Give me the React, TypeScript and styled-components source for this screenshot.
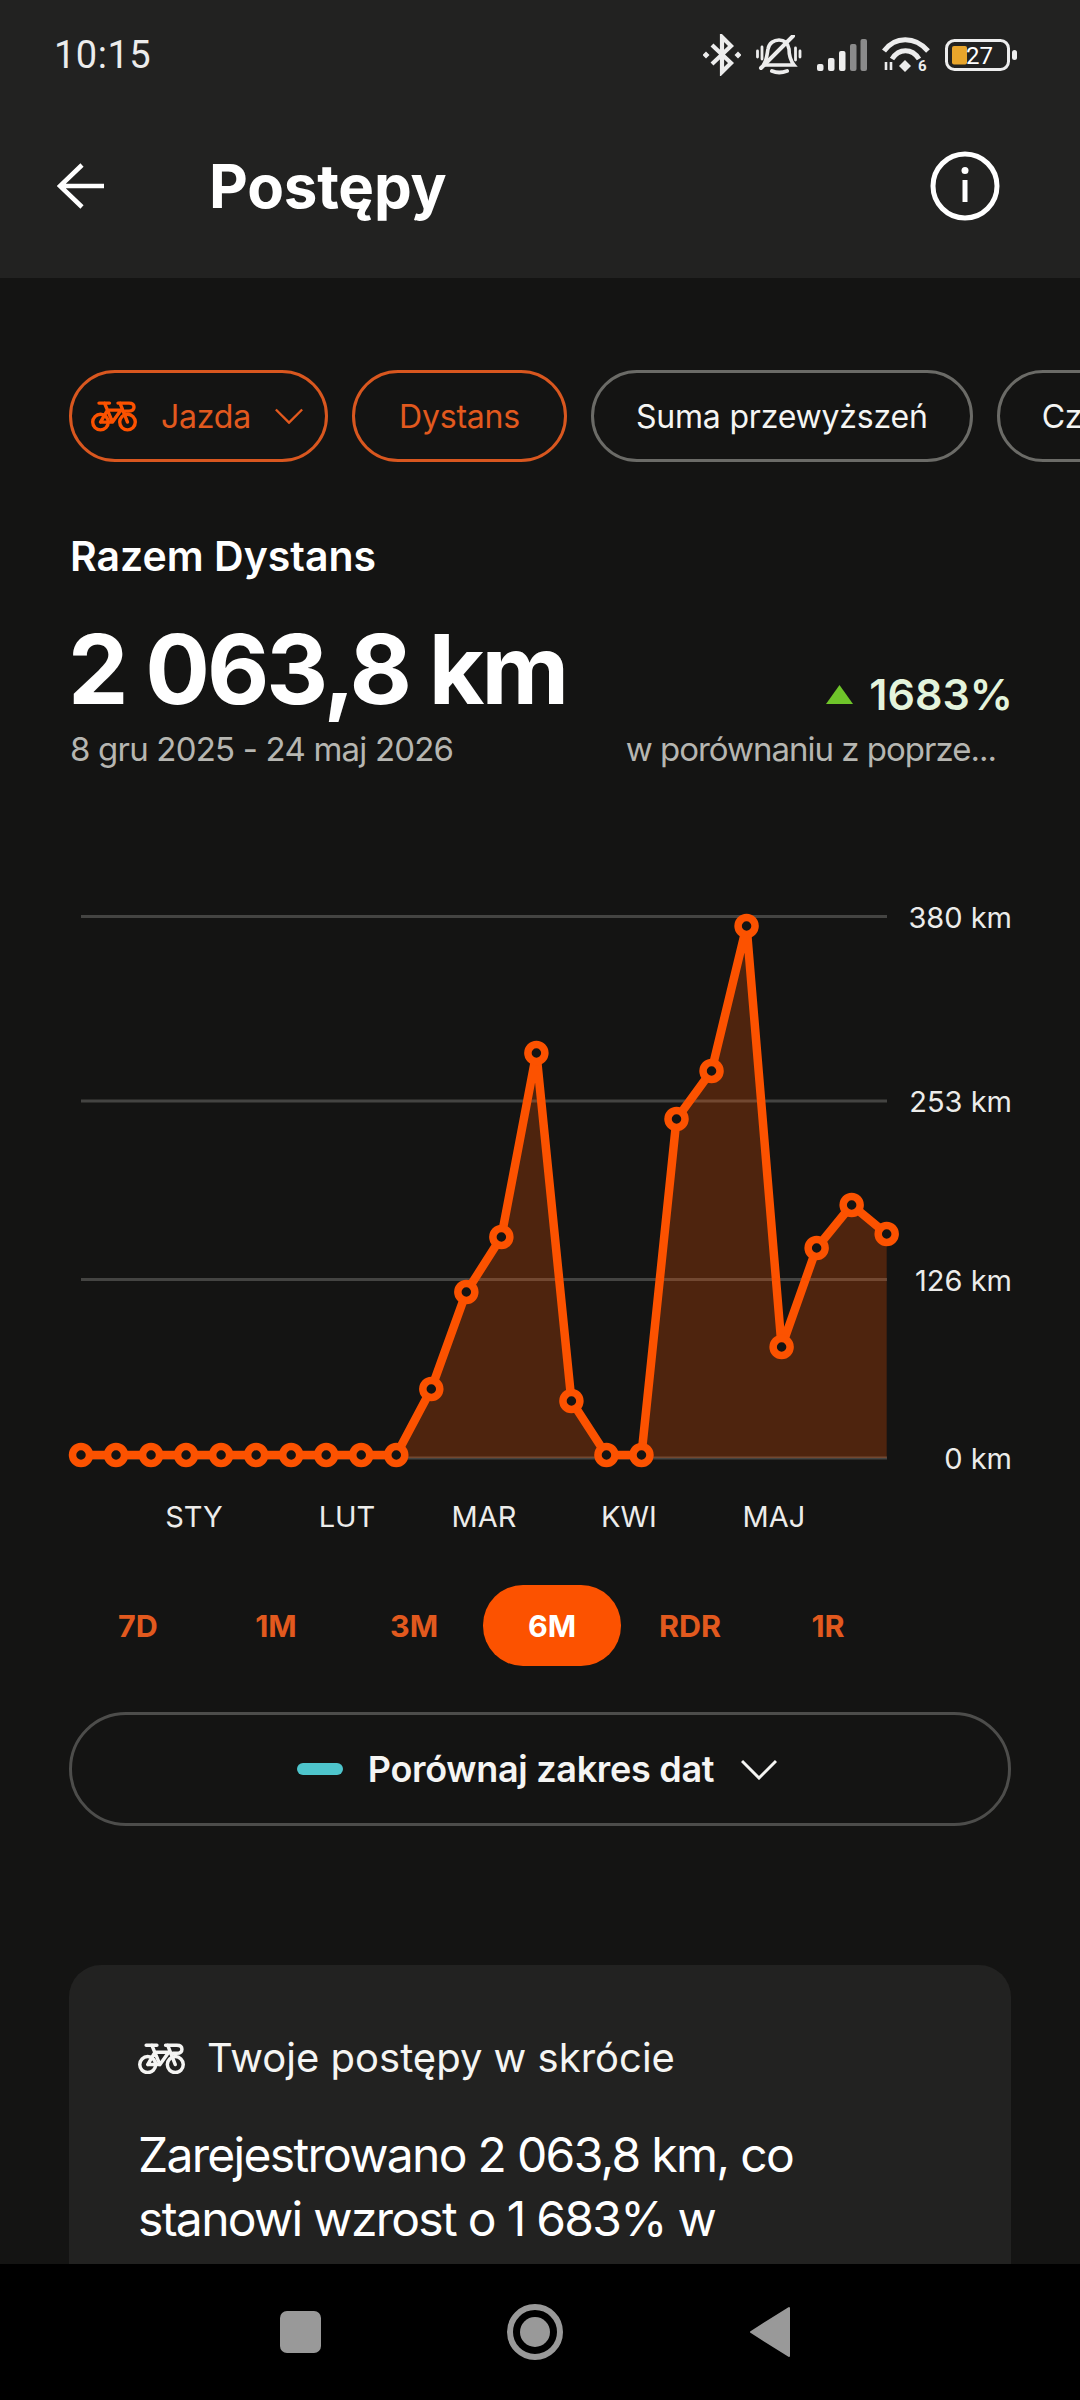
import React from "react";
import styled, { createGlobalStyle } from "styled-components";

const Global = createGlobalStyle`
  html, body { margin: 0; padding: 0; background: #141413; }
  * { box-sizing: border-box; }
`;

const Screen = styled.div`
  width: 1080px;
  height: 2400px;
  display: flex;
  flex-direction: column;
  overflow: hidden;
  background: #141413;
  color: #fff;
  font-family: Inter, "Noto Sans", sans-serif;
`;
const Header = styled.header`
  background: #222221;
  height: 278px;
  flex: none;
`;
const StatusBar = styled.div`
  height: 108px;
  display: flex;
  align-items: center;
  justify-content: space-between;
  padding: 2px 63px 0 54px;
`;
const Time = styled.span`
  font-family: Roboto, sans-serif;
  font-size: 38px;
  letter-spacing: 0.5px;
  color: #ececec;
`;
const StatusIcons = styled.div`
  display: flex;
  align-items: center;
  gap: 15px;
`;
const Toolbar = styled.div`
  height: 156px;
  display: flex;
  align-items: center;
  padding: 0 80px 0 57px;
`;
const Title = styled.h1`
  margin: 0 0 0 104px;
  flex: 1;
  font-size: 60px;
  line-height: 72px;
  font-weight: 700;
  letter-spacing: -0.2px;
`;
const Main = styled.main`
  flex: 1;
  min-height: 0;
  overflow: hidden;
  padding-top: 92px;
`;
const ChipRow = styled.div`
  display: flex;
  gap: 24px;
  padding-left: 69px;
  overflow: hidden;
`;
const Chip = styled.div<{ $active?: boolean; $pad?: number }>`
  flex: none;
  height: 92px;
  border-radius: 46px;
  border: 3px solid ${(p) => (p.$active ? "#d9571f" : "#6b6b67")};
  color: ${(p) => (p.$active ? "#e2591e" : "#f5f5f3")};
  display: flex;
  align-items: center;
  padding: 0 ${(p) => p.$pad ?? 44}px;
  font-size: 32px;
  letter-spacing: -0.2px;
`;
const TypeChip = styled(Chip)`
  padding: 0 22px 0 19px;
  gap: 24px;
`;
const Summary = styled.section`
  padding: 71px 70px 0;
`;
const SummaryTitle = styled.h2`
  margin: 0;
  font-size: 41px;
  line-height: 46px;
  font-weight: 600;
`;
const StatRow = styled.div`
  display: flex;
  justify-content: space-between;
  align-items: flex-end;
  margin-top: 42px;
`;
const Value = styled.div`
  font-size: 96px;
  line-height: 96px;
  font-weight: 700;
  letter-spacing: -3px;
  margin-left: -2px;
`;
const Muted = styled.div`
  font-size: 33px;
  line-height: 44px;
  color: #b6b6b1;
  letter-spacing: -0.8px;
  margin-top: 10px;
`;
const DeltaBlock = styled.div`
  display: flex;
  flex-direction: column;
  align-items: flex-end;
`;
const Delta = styled.div`
  display: flex;
  align-items: center;
  gap: 16px;
  margin-right: -3px;
  font-size: 43px;
  line-height: 48px;
  font-weight: 600;
  color: #e4f4dc;
`;
const DeltaNote = styled(Muted)`
  margin: 9px 14px 0 0;
  letter-spacing: -1px;
`;
const ChartBox = styled.svg`
  display: block;
  margin-top: 129px;
`;
const TabRow = styled.div`
  display: flex;
  padding-left: 69px;
  margin-top: 40px;
`;
const Tab = styled.div<{ $active?: boolean }>`
  width: 138px;
  height: 81px;
  border-radius: 40px;
  display: flex;
  align-items: center;
  justify-content: center;
  font-size: 30.5px;
  font-weight: 700;
  background: ${(p) => (p.$active ? "#fc5200" : "transparent")};
  color: ${(p) => (p.$active ? "#fff" : "#e2591e")};
`;
const CompareButton = styled.div`
  margin: 46px 69px 0;
  height: 114px;
  border-radius: 57px;
  border: 3px solid #4d4d4b;
  display: flex;
  align-items: center;
  justify-content: center;
  padding-right: 6px;
  font-size: 36px;
  font-weight: 600;
  letter-spacing: -0.3px;
  color: #f5f5f3;
`;
const CompareDash = styled.span`
  width: 46px;
  height: 12px;
  border-radius: 6px;
  background: #4ec5cc;
  margin-right: 25px;
`;
const CompareChevron = styled.svg`
  margin-left: 27px;
`;
const Card = styled.section`
  margin: 139px 69px 0;
  height: 400px;
  background: #222221;
  border-radius: 32px 32px 0 0;
  padding: 68px 69px;
`;
const CardHead = styled.div`
  display: flex;
  align-items: center;
  gap: 22px;
  font-size: 40px;
  line-height: 50px;
  color: #f5f5f3;
`;
const CardBody = styled.p`
  margin: 40px 0 0;
  font-size: 48px;
  line-height: 64px;
  letter-spacing: -1.7px;
  color: #fff;
`;
const NavBar = styled.nav`
  height: 136px;
  flex: none;
  background: #000;
  display: flex;
  align-items: center;
  justify-content: center;
  padding-right: 11px;
`;
const NavGlyphs = styled.svg`
  display: block;
`;

const Bike = ({ color, w }: { color: string; w: number }) => (
  <svg width={w} height={w * 0.7} viewBox="0 0 46 32" fill="none" stroke={color} strokeWidth="3.4" strokeLinejoin="round" strokeLinecap="round">
    <circle cx="9.5" cy="22" r="7.8" />
    <circle cx="36.5" cy="22" r="7.8" />
    <path d="M9.5 22 L16.5 10 H30 L21.5 22 H9.5 M13.5 3 L21.5 22 M8 3 H18.5 M27 3 H38 Q43 3 43 7 Q43 11 38 11 H34 M29 3 L36.5 22" />
  </svg>
);

const ChevronDown = ({ color, w }: { color: string; w: number }) => (
  <svg width={w} height={w * 0.58} viewBox="0 0 36 21" fill="none" stroke={color} strokeWidth="3">
    <path d="M1 2 L18 19 L35 2" />
  </svg>
);

const StatusGlyphs = () => (
  <StatusIcons>
    <svg width="38" height="42" viewBox="0 0 38 42" fill="none" stroke="#ededed" strokeWidth="4.2">
      <path d="M9 11 L28 29 L19 38 V3 L28 12 L9 30" />
      <path d="M3 17.5 L6.5 21 L3 24.5 L-0.5 21 Z M35 17.5 L38.5 21 L35 24.5 L31.5 21 Z" fill="#ededed" stroke="none" />
    </svg>
    <svg width="46" height="40" viewBox="0 0 46 40" fill="none" stroke="#ededed" strokeWidth="3.6" strokeLinecap="round">
      <path d="M8 29 C11 24 11 19 12 14 C13 8 18 5 23 5 C29 5 32 9 33 14 C33 20 34 25 38 30 H8" />
      <path d="M16 36 Q23 39 31 36" strokeWidth="4" />
      <path d="M37 1 L5 33" strokeWidth="4" />
      <path d="M1.5 16 V22 M6 12 V24 M39.5 13 V25 M44 16 V22" strokeWidth="2.8" />
    </svg>
    <svg width="50" height="34" viewBox="0 0 50 34" fill="#ededed">
      <rect x="0" y="26" width="6.5" height="7" rx="2" />
      <rect x="11" y="20" width="6.5" height="13" rx="2" />
      <rect x="22" y="13" width="6.5" height="20" rx="2" />
      <rect x="33" y="6" width="6.5" height="27" rx="2" fill="#8b8b8b" />
      <rect x="43.5" y="1" width="6.5" height="32" rx="2" fill="#8b8b8b" />
    </svg>
    <svg width="48" height="36" viewBox="0 0 48 36" fill="none" stroke="#ededed" strokeWidth="5">
      <path d="M2 14 C13 -1 33 -1 46 14" />
      <path d="M10 22 C17 11 30 11 37 22" />
      <path d="M23 23 L29 29 L23 35 L17 29 Z" fill="#ededed" stroke="none" />
      <path d="M4 25 V33 M9 25 V33" strokeWidth="2.6" />
      <text x="36" y="34" fontFamily="Roboto, sans-serif" fontSize="15" fontWeight="700" fill="#ededed" stroke="none">6</text>
    </svg>
    <svg width="72" height="32" viewBox="0 0 72 32">
      <rect x="1.5" y="1.5" width="62" height="29" rx="8" fill="none" stroke="#ededed" strokeWidth="3" />
      <rect x="7" y="7" width="15" height="18.5" rx="2" fill="#e8a52b" />
      <text x="21" y="25" fontFamily="Roboto, sans-serif" fontSize="24" fill="#fff">27</text>
      <rect x="67" y="11" width="5" height="10" rx="2.5" fill="#ededed" />
    </svg>
  </StatusIcons>
);

const ORANGE = "#fc5200";
const xs = Array.from({ length: 24 }, (_, i) => 81 + i * 35.03);
const ys = [1455, 1455, 1455, 1455, 1455, 1455, 1455, 1455, 1455, 1455, 1389, 1292, 1237, 1053, 1401, 1455, 1455, 1119, 1071, 926, 1347, 1248, 1205, 1234];
const TOP = 900;
const pts = xs.map((x, i) => ({ x, y: ys[i] - TOP }));
const linePath = pts.map((p, i) => `${i ? "L" : "M"}${p.x} ${p.y}`).join(" ");
const BASE = 1458 - TOP;
const areaPath = `M${pts[9].x} ${BASE} ` + pts.slice(9).map((p) => `L${p.x} ${p.y}`).join(" ") + ` L${pts[23].x} ${BASE} Z`;
const grids = [
  { y: 916.5, label: "380 km" },
  { y: 1101, label: "253 km" },
  { y: 1279.5, label: "126 km" },
  { y: 1458, label: "0 km" },
];
const months = [
  { x: 194, t: "STY" },
  { x: 347, t: "LUT" },
  { x: 484, t: "MAR" },
  { x: 629, t: "KWI" },
  { x: 774, t: "MAJ" },
];

const Chart = () => (
  <ChartBox width="1080" height="645" viewBox="0 0 1080 645">
    {grids.map((g) => (
      <line key={g.y} x1="81" x2="887" y1={g.y - TOP} y2={g.y - TOP} stroke="#444442" strokeWidth="3" />
    ))}
    <path d={areaPath} fill={ORANGE} fillOpacity="0.25" />
    <path d={linePath} fill="none" stroke={ORANGE} strokeWidth="8.5" strokeLinejoin="round" />
    {pts.map((p) => (
      <circle key={p.x} cx={p.x} cy={p.y} r="8.5" fill="#141413" stroke={ORANGE} strokeWidth="7.5" />
    ))}
    {grids.map((g) => (
      <text key={g.label} x="1012" y={g.y - TOP + 11} textAnchor="end" fontFamily="Inter, sans-serif" fontSize="29" fill="#ececea">
        {g.label}
      </text>
    ))}
    {months.map((m) => (
      <text key={m.t} x={m.x} y={627} textAnchor="middle" fontFamily="Inter, sans-serif" fontSize="29" fill="#ececea">
        {m.t}
      </text>
    ))}
  </ChartBox>
);

export default function App() {
  return (
    <Screen>
      <Global />
      <Header>
        <StatusBar>
          <Time>10:15</Time>
          <StatusGlyphs />
        </StatusBar>
        <Toolbar>
          <svg width="48" height="46" viewBox="0 0 48 46" fill="none" stroke="#fff" strokeWidth="4.6">
            <path d="M25 2 L3 23 L25 44 M3 23 H47" />
          </svg>
          <Title>Postępy</Title>
          <svg width="70" height="70" viewBox="0 0 70 70" fill="none">
            <circle cx="35" cy="35" r="32" stroke="#fff" strokeWidth="5" />
            <circle cx="35" cy="19.5" r="3.5" fill="#fff" />
            <path d="M35 29 V51" stroke="#fff" strokeWidth="5" />
          </svg>
        </Toolbar>
      </Header>
      <Main>
        <ChipRow>
          <TypeChip $active>
            <Bike color="#fc5200" w={46} />
            <span>Jazda</span>
            <ChevronDown color="#e2591e" w={28} />
          </TypeChip>
          <Chip $active>Dystans</Chip>
          <Chip $pad={42}>Suma przewyższeń</Chip>
          <Chip $pad={42}>Czas</Chip>
        </ChipRow>
        <Summary>
          <SummaryTitle>Razem Dystans</SummaryTitle>
          <StatRow>
            <div>
              <Value>2 063,8 km</Value>
              <Muted>8 gru 2025 - 24 maj 2026</Muted>
            </div>
            <DeltaBlock>
              <Delta>
                <svg width="27" height="19" viewBox="0 0 27 19">
                  <path d="M13.5 0 L27 19 H0 Z" fill="#6fc52a" />
                </svg>
                <span>1683%</span>
              </Delta>
              <DeltaNote>w porównaniu z poprze...</DeltaNote>
            </DeltaBlock>
          </StatRow>
        </Summary>
        <Chart />
        <TabRow>
          <Tab>7D</Tab>
          <Tab>1M</Tab>
          <Tab>3M</Tab>
          <Tab $active>6M</Tab>
          <Tab>RDR</Tab>
          <Tab>1R</Tab>
        </TabRow>
        <CompareButton>
          <CompareDash />
          <span>Porównaj zakres dat</span>
          <CompareChevron width="36" height="21" viewBox="0 0 36 21" fill="none" stroke="#f5f5f3" strokeWidth="3">
            <path d="M1 2 L18 19 L35 2" />
          </CompareChevron>
        </CompareButton>
        <Card>
          <CardHead>
            <Bike color="#f5f5f3" w={47} />
            <span>Twoje postępy w skrócie</span>
          </CardHead>
          <CardBody>
            Zarejestrowano 2 063,8 km, co
            <br />
            stanowi wzrost o 1 683% w
          </CardBody>
        </Card>
      </Main>
      <NavBar>
        <NavGlyphs width="510" height="60" viewBox="0 0 510 60">
          <rect x="0" y="9" width="41" height="42" rx="7" fill="#999" />
          <circle cx="255" cy="30" r="25" fill="none" stroke="#999" strokeWidth="6" />
          <circle cx="255" cy="30" r="15" fill="#999" />
          <path d="M509 6 V54 L471 30 Z" fill="#999" stroke="#999" strokeWidth="2" strokeLinejoin="round" />
        </NavGlyphs>
      </NavBar>
    </Screen>
  );
}
